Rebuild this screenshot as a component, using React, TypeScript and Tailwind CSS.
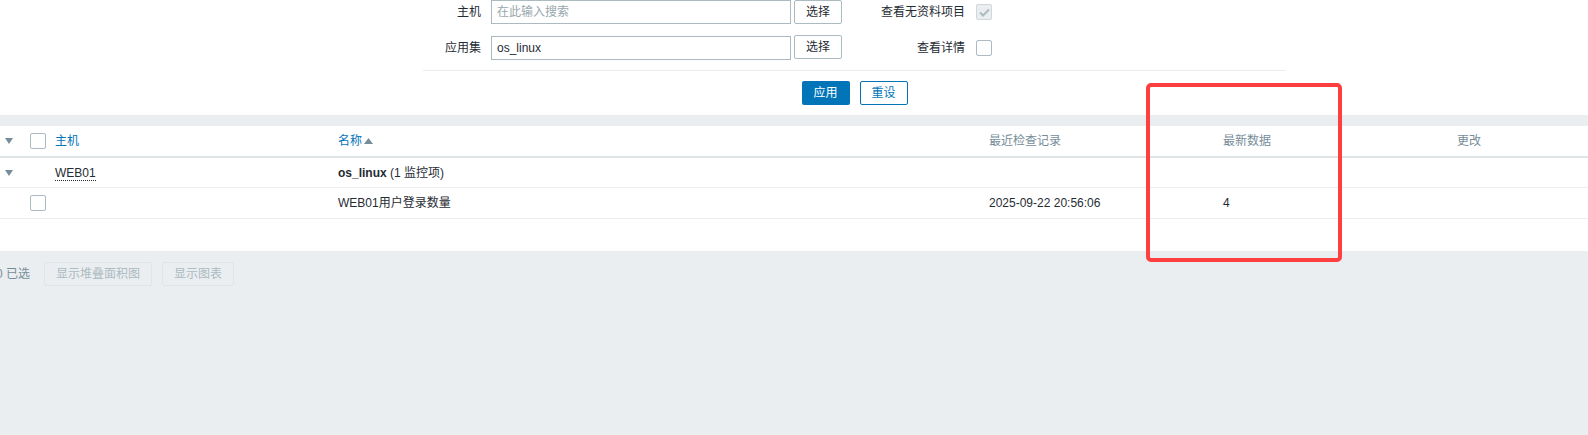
import React from 'react';

const font = { fontFamily: '"Liberation Sans", Arial, "Noto Sans CJK SC", sans-serif' };

const cols = 'grid grid-cols-[30px_25px_283px_651px_234px_234px_1fr] items-center';

const Caret = () => (
  <svg width="8" height="6" viewBox="0 0 8 6" className="ml-[5px]">
    <path d="M0 0 L8 0 L4 6 Z" fill="#768d99" />
  </svg>
);

const Box = () => (
  <span className="block w-[16px] h-[16px] border border-[#acbbc2] rounded-[2px] bg-white" />
);

const SelectBtn = () => (
  <button className="h-[24px] w-[48px] border border-[#acbbc2] rounded-[2px] bg-white text-[#1f2c33] text-[12px]">
    选择
  </button>
);

const App: React.FC = () => {
  return (
    <div className="relative w-full h-[435px] bg-[#ebeef0] overflow-hidden text-[12px] text-[#1f2c33]" style={font}>
      {/* filter */}
      <div className="bg-white h-[115px]">
        <div className="ml-[423px] w-[863px]">
          <div className="flex flex-col gap-[12px]">
            <div className="flex items-center h-[24px]">
              <span className="w-[58px] text-right">主机</span>
              <input
                readOnly
                placeholder="在此输入搜索"
                className="ml-[10px] w-[300px] h-[24px] border border-[#acbbc2] px-[5px] outline-none placeholder:text-[#98a7ae]"
              />
              <span className="ml-[3px]"><SelectBtn /></span>
              <span className="w-[123px] text-right">查看无资料项目</span>
              <span className="ml-[11px] w-[16px] h-[16px] border border-[#cfd7db] rounded-[2px] bg-[#ebeef0] flex items-center justify-center">
                <svg width="11" height="9" viewBox="0 0 11 9">
                  <path d="M1 4.5 L4 7.5 L10 1.5" stroke="#acbbc2" strokeWidth="2" fill="none" />
                </svg>
              </span>
            </div>
            <div className="flex items-center h-[24px]">
              <span className="w-[58px] text-right">应用集</span>
              <input
                readOnly
                value="os_linux"
                className="ml-[10px] w-[300px] h-[24px] border border-[#acbbc2] px-[5px] outline-none"
              />
              <span className="ml-[3px] -mt-[3px]"><SelectBtn /></span>
              <span className="w-[123px] text-right">查看详情</span>
              <span className="ml-[11px]"><Box /></span>
            </div>
          </div>
          <div className="mt-[10px] border-t border-[#ebeef0]" />
          <div className="mt-[10px] flex justify-center gap-[10px]">
            <button className="h-[24px] w-[48px] rounded-[2px] bg-[#0275b8] text-white text-[12px]">应用</button>
            <button className="h-[24px] w-[48px] rounded-[2px] border border-[#0275b8] bg-white text-[#0275b8] text-[12px]">重设</button>
          </div>
        </div>
      </div>

      {/* table */}
      <div className="mt-[11px] bg-white h-[125px]">
        <div className={`${cols} h-[32px] border-b-2 border-[#dfe4e7]`}>
          <Caret />
          <Box />
          <span className="text-[#0275b8]">主机</span>
          <span className="flex items-center text-[#0275b8]">
            名称
            <svg width="9" height="6" viewBox="0 0 9 6" className="ml-[2px]">
              <path d="M0 6 L9 6 L4.5 0 Z" fill="#768d99" />
            </svg>
          </span>
          <span className="text-[#768d99]">最近检查记录</span>
          <span className="text-[#768d99]">最新数据</span>
          <span className="text-[#768d99]">更改</span>
        </div>
        <div className={`${cols} h-[30px] border-b border-[#ebeef0]`}>
          <Caret />
          <span />
          <span>
            <span className="border-b border-dotted border-[#1f2c33] leading-[14px] inline-block">WEB01</span>
          </span>
          <span>
            <b>os_linux</b> (1 监控项)
          </span>
          <span />
          <span />
          <span />
        </div>
        <div className={`${cols} h-[31px] border-b border-[#ebeef0]`}>
          <span />
          <Box />
          <span />
          <span>WEB01用户登录数量</span>
          <span>2025-09-22 20:56:06</span>
          <span>4</span>
          <span />
        </div>
      </div>

      {/* footer actions */}
      <div className="mt-[11px] flex items-center -ml-[4px]">
        <span className="w-[48px] text-[#768d99] text-[12px]">0 已选</span>
        <button className="h-[24px] w-[108px] border border-[#dfe4e7] rounded-[2px] bg-[#ebeef0] text-[#acbbc2] text-[12px]">
          显示堆叠面积图
        </button>
        <button className="ml-[10px] h-[24px] w-[72px] border border-[#dfe4e7] rounded-[2px] bg-[#ebeef0] text-[#acbbc2] text-[12px]">
          显示图表
        </button>
      </div>

      {/* annotation */}
      <div className="absolute left-[1146px] top-[83px] w-[196px] h-[179px] border-[4px] border-[#fd3f3f] rounded-[5px] pointer-events-none" />
    </div>
  );
};

export default App;
